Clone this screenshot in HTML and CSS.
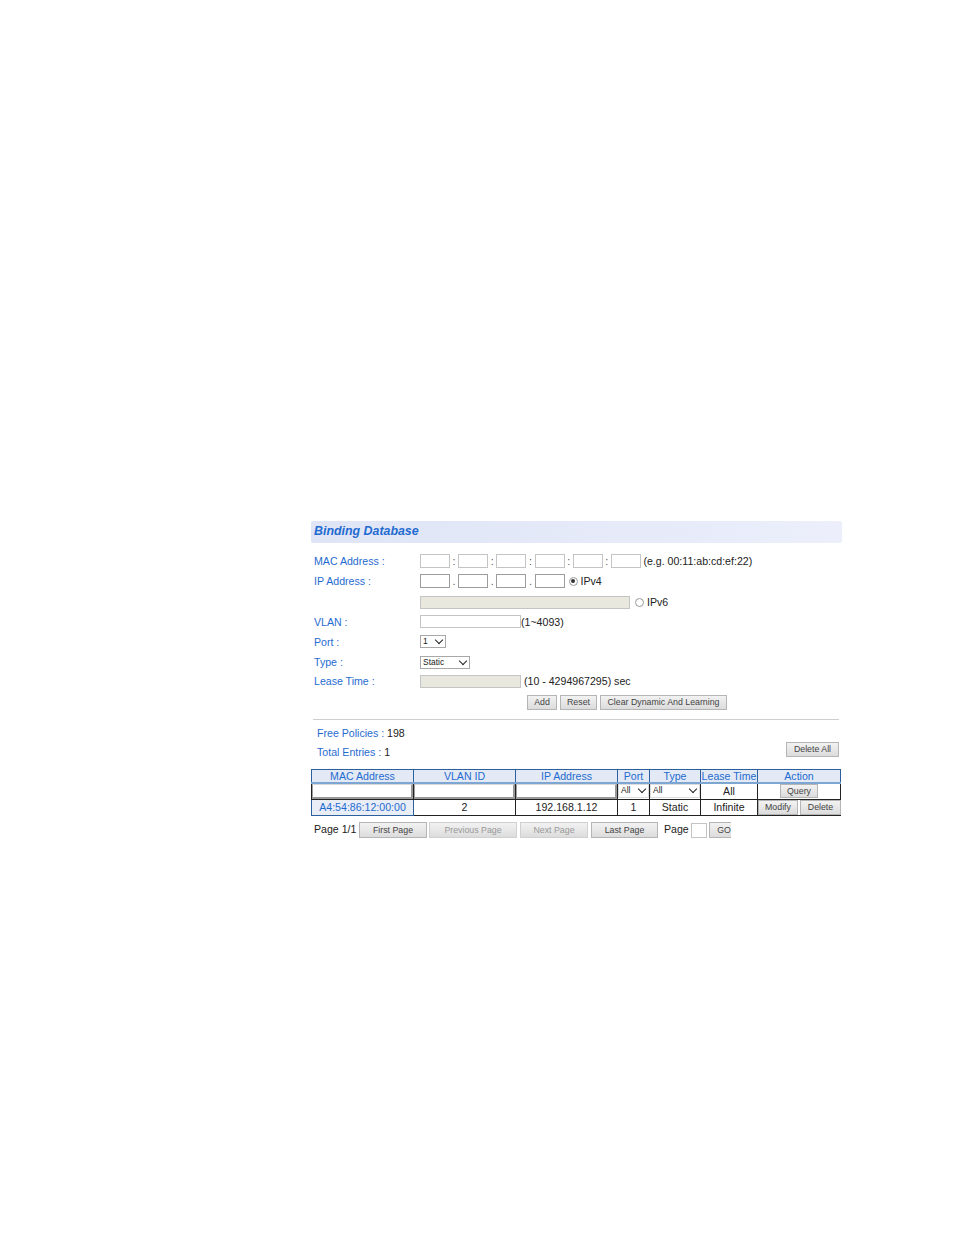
FILE: index.html
```html
<!DOCTYPE html>
<html lang="en">
<head>
  <meta charset="UTF-8" />
  <title>Binding Database</title>
  <link rel="stylesheet" href="styles.css">
</head>
<body>

<div class="panel">
  <h2 class="title">Binding Database</h2>

  <!-- Add form -->
  <form class="binding-form">
    <div class="form-row first-row">
      <label>MAC Address :</label>
      <div class="fields">
        <input class="octet" type="text"><span class="sep">:</span>
        <input class="octet" type="text"><span class="sep">:</span>
        <input class="octet" type="text"><span class="sep">:</span>
        <input class="octet" type="text"><span class="sep">:</span>
        <input class="octet" type="text"><span class="sep">:</span>
        <input class="octet" type="text">
        <span class="hint mac-hint">(e.g. 00:11:ab:cd:ef:22)</span>
      </div>
    </div>
    <div class="form-row">
      <label>IP Address :</label>
      <div class="fields">
        <input class="octet dark" type="text"><span class="sep">.</span>
        <input class="octet dark" type="text"><span class="sep">.</span>
        <input class="octet dark" type="text"><span class="sep">.</span>
        <input class="octet dark" type="text">
        <span class="radio checked ipv4-radio"></span>
        <span class="hint">IPv4</span>
      </div>
    </div>
    <div class="form-row ipv6-row">
      <label></label>
      <div class="fields">
        <input class="wide-disabled" type="text" disabled>
        <span class="radio ipv6-radio"></span>
        <span class="hint">IPv6</span>
      </div>
    </div>
    <div class="form-row">
      <label>VLAN :</label>
      <div class="fields">
        <input class="medium" type="text"><span class="hint tight">(1~4093)</span>
      </div>
    </div>
    <div class="form-row">
      <label>Port :</label>
      <div class="fields">
        <div class="select port-select">1</div>
      </div>
    </div>
    <div class="form-row">
      <label>Type :</label>
      <div class="fields">
        <div class="select type-select">Static</div>
      </div>
    </div>
    <div class="form-row lease-row">
      <label>Lease Time :</label>
      <div class="fields">
        <input class="medium off" type="text" disabled><span class="hint lease-hint">(10 - 4294967295) sec</span>
      </div>
    </div>
    <div class="form-actions">
      <button type="button" class="btn add-btn">Add</button>
      <button type="button" class="btn reset-btn">Reset</button>
      <button type="button" class="btn clear-btn">Clear Dynamic And Learning</button>
    </div>
  </form>

  <hr class="divider">

  <div class="summary">
    <div class="counts">
      <p><span class="blue">Free Policies :</span> 198</p>
      <p><span class="blue">Total Entries :</span> 1</p>
    </div>
    <button type="button" class="btn delete-all">Delete All</button>
  </div>

  <!-- Entries -->
  <table class="entries">
    <colgroup>
      <col class="c-mac"><col class="c-vlan"><col class="c-ip"><col class="c-port">
      <col class="c-type"><col class="c-lease"><col class="c-action">
    </colgroup>
    <thead>
      <tr>
        <th>MAC Address</th>
        <th>VLAN ID</th>
        <th>IP Address</th>
        <th>Port</th>
        <th>Type</th>
        <th>Lease Time</th>
        <th>Action</th>
      </tr>
    </thead>
    <tbody>
      <tr class="filter-row">
        <td><input class="cell-input" type="text"></td>
        <td><input class="cell-input" type="text"></td>
        <td><input class="cell-input" type="text"></td>
        <td><div class="select cell-select">All</div></td>
        <td><div class="select cell-select">All</div></td>
        <td>All</td>
        <td><button type="button" class="btn query-btn">Query</button></td>
      </tr>
      <tr class="data-row">
        <td class="link-cell">A4:54:86:12:00:00</td>
        <td>2</td>
        <td>192.168.1.12</td>
        <td>1</td>
        <td>Static</td>
        <td>Infinite</td>
        <td class="action-cell">
          <button type="button" class="btn row-btn modify-btn">Modify</button><button type="button" class="btn row-btn delete-btn">Delete</button>
        </td>
      </tr>
    </tbody>
  </table>

  <div class="pager">
    <span class="page-count">Page 1/1</span>
    <button type="button" class="btn page-btn first-btn">First Page</button>
    <button type="button" class="btn page-btn prev-btn off-btn">Previous Page</button>
    <button type="button" class="btn page-btn next-btn off-btn">Next Page</button>
    <button type="button" class="btn page-btn last-btn">Last Page</button>
    <span class="page-label">Page</span>
    <input class="page-input" type="text">
    <button type="button" class="btn page-btn go-btn">GO</button>
  </div>
</div>

</body>
</html>
```

FILE: styles.css
```css
* {
  box-sizing: border-box;
}

body {
  margin: 0;
  min-height: 1235px;
  background: #fff;
  font-family: "Liberation Sans", Arial, sans-serif;
  font-size: 10.6px;
  color: #222;
}

.panel {
  width: 531px;
  margin-left: 311px;
  padding-top: 521px;
}

.title {
  height: 22px;
  margin: 0;
  padding-left: 3px;
  background: linear-gradient(90deg, #dfe5f6, #e6eaf9 60%, #eceffb);
  border-radius: 2px;
  color: #1f6bd0;
  font-size: 12.4px;
  font-weight: bold;
  font-style: italic;
  line-height: 20px;
}

.binding-form {
  padding-top: 8px;
}

.form-row {
  display: flex;
  align-items: center;
  height: 20.2px;
}

.form-row label {
  width: 109px;
  padding-left: 3px;
  color: #1f6bd0;
  flex-shrink: 0;
}

.ipv6-row .fields {
  padding-top: 2px;
}

.lease-row .fields {
  padding-bottom: 2px;
}

.lease-row label {
  padding-bottom: 2px;
}

.fields {
  display: flex;
  align-items: center;
  height: 100%;
}

input {
  height: 14px;
  padding: 0;
  margin: 0;
  border: 1px solid #c4c4c4;
  background: #fff;
}

.octet {
  width: 30px;
}

.octet.dark {
  border-color: #9c9c9c;
}

.sep {
  width: 8.2px;
  text-align: center;
  color: #555;
}

.hint {
  white-space: nowrap;
}

.mac-hint {
  margin-left: 2.5px;
}

.tight {
  margin-left: 0;
}

.lease-hint {
  margin-left: 3px;
}

.radio {
  position: relative;
  width: 9px;
  height: 9px;
  border: 1px solid #9a9a9a;
  border-radius: 50%;
  background: #fff;
}

.radio.checked::after {
  content: "";
  position: absolute;
  left: 1.5px;
  top: 1.5px;
  width: 4px;
  height: 4px;
  border-radius: 50%;
  background: #333;
}

.ipv4-radio {
  margin: 0 3px 0 4px;
}

.ipv6-radio {
  margin: 0 3px 0 5px;
}

.wide-disabled {
  width: 210px;
  height: 13px;
  border-color: #c4c4c4;
  background: #e8e8df;
}

.medium {
  width: 101px;
  height: 13px;
}

.medium.off {
  background: #e8e8df;
}

.select {
  position: relative;
  height: 13px;
  padding-left: 2px;
  border: 1px solid #a8a8a8;
  background: #fff;
  font-size: 8.5px;
  line-height: 11px;
}

.select::after {
  content: "";
  position: absolute;
  right: 3px;
  top: 1px;
  width: 5px;
  height: 5px;
  border-right: 1.7px solid #222;
  border-bottom: 1.7px solid #222;
  transform: rotate(45deg);
}

.port-select {
  width: 26px;
}

.type-select {
  width: 50px;
}

.btn {
  height: 15px;
  padding: 0;
  margin: 0;
  border: 1px solid #b5b5b5;
  background: linear-gradient(#f2f2f2, #dcdcdc);
  color: #444;
  font-family: inherit;
  font-size: 8.8px;
  line-height: 13px;
}

.form-actions {
  display: flex;
  gap: 3px;
  height: 20px;
  align-items: center;
  padding-left: 216px;
}

.add-btn {
  width: 30px;
}

.reset-btn {
  width: 37px;
}

.clear-btn {
  width: 127px;
}

.divider {
  width: 526px;
  height: 1px;
  margin: 7px 0 0 2px;
  border: 0;
  background: #cfcfcf;
}

.summary {
  display: flex;
  justify-content: space-between;
  align-items: flex-start;
  height: 49px;
  padding-right: 3px;
}

.counts {
  padding: 4px 0 0 6px;
}

.counts p {
  margin: 0;
  height: 19px;
  line-height: 19px;
}

.blue {
  color: #1f6bd0;
}

.delete-all {
  width: 53px;
  margin-top: 22px;
}

.entries {
  width: 530px;
  table-layout: fixed;
  border-collapse: collapse;
  text-align: center;
}

.c-mac,
.c-vlan,
.c-ip {
  width: 102px;
}

.c-port {
  width: 32px;
}

.c-type {
  width: 51px;
}

.c-lease {
  width: 57px;
}

.entries th {
  height: 13px;
  padding: 0;
  border: 1px solid #2c5f9e;
  border-bottom: 2px solid #7ea6d2;
  background: #e3eaf5;
  color: #1f6bd0;
  font-weight: normal;
  line-height: 11px;
  white-space: nowrap;
}

.entries td {
  padding: 0;
  border: 1px solid #222;
  white-space: nowrap;
}

.filter-row td {
  height: 16px;
  border-top: 0;
}

.data-row td {
  height: 16px;
}

.cell-input {
  display: block;
  width: 100%;
  height: 15px;
  border: 1px solid #d8d8d8;
  border-left-color: #a0a0a0;
  border-right: 2px solid #999;
  border-bottom: 2px solid #999;
}

.cell-select {
  height: 14px;
  text-align: left;
  border-color: #dcdcdc;
}

.query-btn {
  width: 38px;
  height: 14px;
}

.link-cell {
  background: #e8edf6;
  color: #1f6bd0;
}

.entries .link-cell {
  border-color: #2c5f9e;
}

.entries .action-cell {
  font-size: 0;
  background: #fff;
}

.row-btn {
  height: 15px;
  vertical-align: top;
}

.modify-btn {
  width: 40px;
  margin-right: 2px;
}

.delete-btn {
  width: 41px;
}

.pager {
  display: flex;
  align-items: center;
  height: 17px;
  margin-top: 6px;
  padding-left: 3px;
}

.page-count {
  width: 45px;
  padding-bottom: 2px;
}

.page-btn {
  height: 16px;
}

.first-btn {
  width: 68px;
  margin-right: 2px;
}

.prev-btn {
  width: 88px;
  margin-right: 3px;
}

.next-btn {
  width: 68px;
  margin-right: 3px;
}

.last-btn {
  width: 67px;
}

.off-btn {
  color: #999;
  border-color: #d0d0d0;
}

.page-label {
  width: 27px;
  margin-left: 6px;
  padding-bottom: 2px;
}

.page-input {
  width: 16px;
  height: 15px;
  margin-right: 2px;
  border-color: #c4c4c4;
}

.go-btn {
  width: 22px;
  padding-left: 7px;
  border-right: 0;
}
```
